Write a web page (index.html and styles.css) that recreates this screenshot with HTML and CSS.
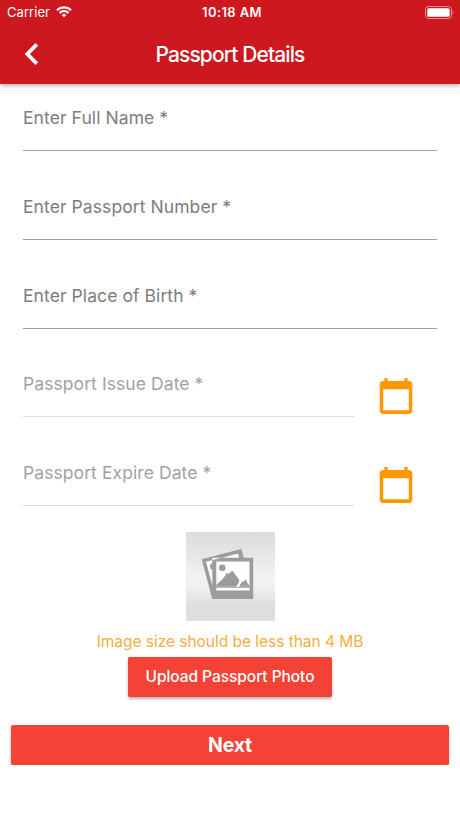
FILE: index.html
```html
<!DOCTYPE html>
<html lang="en">
<head>
<meta charset="utf-8">
<title>Passport Details</title>
<link rel="stylesheet" href="styles.css">
</head>
<body>
<header class="header">
  <div class="status">
    <div class="carrier"><span>Carrier</span>
      <svg class="wifi" width="16" height="12" viewBox="0 0 16 12" fill="none" stroke="#fff" stroke-width="2.2"><path d="M1 4.1C4.8.5 11.2.5 15 4.1M3.6 6.9c2.4-2.3 6.4-2.3 8.8 0"/><path d="M8 11.3 5.6 8.9c1.3-1.2 3.5-1.2 4.8 0z" fill="#fff" stroke="none"/></svg>
    </div>
    <time class="time">10:18 AM</time>
    <svg class="battery" width="29" height="13" viewBox="0 0 29 13"><rect x=".5" y=".5" width="26" height="12" rx="3.2" fill="none" stroke="#fff" stroke-opacity=".5"/><rect x="2.3" y="2.2" width="22.4" height="8.6" rx="1.6" fill="#fff"/><path d="M27.6 4.6v4c1.3-.6 1.3-3.4 0-4z" fill="#fff" fill-opacity=".5"/></svg>
  </div>
  <div class="nav">
    <svg class="back" width="16" height="24" viewBox="0 0 16 24" fill="none" stroke="#fff" stroke-width="3.8"><path d="M13.8 2.3 4.3 12 13.8 21.7"/></svg>
    <h1 class="title">Passport Details</h1>
  </div>
</header>
<main>
  <form class="form">
    <div class="field"><label>Enter Full Name *</label></div>
    <div class="field"><label>Enter Passport Number *</label></div>
    <div class="field"><label>Enter Place of Birth *</label></div>
    <div class="row">
      <div class="field muted"><label>Passport Issue Date *</label></div>
      <svg class="calendar" width="34" height="38" viewBox="0 0 34 38"><path fill="#ff9800" fill-rule="evenodd" d="M5.4 1h3.3v3h16.6V1h3.3v3h1.1a3.6 3.6 0 0 1 3.6 3.6v25.7a3.6 3.6 0 0 1-3.6 3.6H4.3a3.6 3.6 0 0 1-3.6-3.6V7.6A3.6 3.6 0 0 1 4.3 4h1.1zM4.2 12.3v21h25.6v-21z"/></svg>
    </div>
    <div class="row">
      <div class="field muted"><label>Passport Expire Date *</label></div>
      <svg class="calendar" width="34" height="38" viewBox="0 0 34 38"><path fill="#ff9800" fill-rule="evenodd" d="M5.4 1h3.3v3h16.6V1h3.3v3h1.1a3.6 3.6 0 0 1 3.6 3.6v25.7a3.6 3.6 0 0 1-3.6 3.6H4.3a3.6 3.6 0 0 1-3.6-3.6V7.6A3.6 3.6 0 0 1 4.3 4h1.1zM4.2 12.3v21h25.6v-21z"/></svg>
    </div>
  </form>
  <section class="upload">
    <div class="photo">
      <svg width="89" height="89" viewBox="0 0 89 89">
        <path fill="#fff" fill-opacity=".9" d="M19.500 29 53 20l3 8h9v31H29z"/>
        <path fill="#9c9c9c" fill-rule="evenodd" d="M15.700 27.300 55.300 17l2.500 8.700H67.200V67H26.200zM20 29.700l6.300 24V25.700h26.800l-1.100-4.200zM30.300 29.500v25.300h33.200V29.500zM30.300 55.700v2.800h33.200v-2.800z"/>
        <circle cx="36.300" cy="35.700" r="3.300" fill="#9c9c9c"/>
        <path fill="#9c9c9c" d="M26.700 31a3.600 3.600 0 0 0 0 7zM30.300 54.800v-1.800l7.700-7.500 2.500-4.300 2.300.6 3.600-3.200 3.300 4.700 3.300 4v3l-3 4.500zM53 54.800l3.300-5.500 1.500.5 2.200-2.800 1.500 4.300 2 2v1.500z"/>
      </svg>
    </div>
    <p class="hint">Image size should be less than 4 MB</p>
    <button class="button upload-button" type="button"><span>Upload Passport Photo</span></button>
  </section>
  <button class="button next" type="button">Next</button>
</main>
</body>
</html>
```
FILE: styles.css
```css
* { box-sizing: border-box; }
body { margin: 0; background: #fff; font-family: Inter, "Liberation Sans", sans-serif; }
svg { display: block; flex: none; }
.header { height: 84px; background: #cc181e; color: #fff; box-shadow: 0 1px 5px rgba(0,0,0,.4); }
.status { display: grid; grid-template-columns: 1fr auto 1fr; align-items: center; height: 24px; padding: 0 6px 0 7px; }
.carrier { display: flex; align-items: center; gap: 6px; font-size: 13px; letter-spacing: .05px; }
.time { padding-left: 3px; font-size: 13px; font-weight: 600; letter-spacing: .4px; }
.battery { justify-self: end; }
.nav { display: grid; grid-template-columns: 60px 1fr 60px; align-items: center; height: 60px; }
.back { margin-left: 23px; }
.title { margin: 0; text-align: center; font-size: 21px; font-weight: 500; letter-spacing: -.9px; }
.form { display: flex; flex-direction: column; gap: 43.8px; padding: 22px 23px 0; }
.field { height: 45px; border-bottom: 1px solid #a0a0a0; color: #7d7d7d; font-size: 17.5px; line-height: 24px; letter-spacing: .08px; white-space: nowrap; }
.field label { display: block; }
.row { display: flex; align-items: flex-start; height: 45px; }
.row .field { width: 331px; }
.muted { color: #a2a2a2; border-color: #ddd; }
.calendar { margin: 5px 0 0 25px; }
.upload { display: flex; flex-direction: column; align-items: center; margin-top: 25.8px; }
.photo { width: 89px; height: 89px; background: linear-gradient(#dcdcdc, #e6e6e6 25%, #f3f3f3 50%, #f0f0f0 62%, #dcdcdc 85%, #e0e0e0); }
.hint { margin: 11px 0 5px; color: #f5ad42; font-size: 15.5px; line-height: 20px; letter-spacing: -.03px; white-space: nowrap; }
.button { display: block; padding: 0; border: 0; border-radius: 2px; background: #f44336; color: #fff; font-family: inherit; box-shadow: 0 2px 3px rgba(0,0,0,.3); }
.upload-button { width: 204px; height: 40px; font-size: 15.5px; font-weight: 500; letter-spacing: -.05px; white-space: nowrap; }
.next { width: 438px; height: 40px; margin: 28px 0 0 11px; font-size: 19.5px; font-weight: 700; letter-spacing: -.2px; }
```
